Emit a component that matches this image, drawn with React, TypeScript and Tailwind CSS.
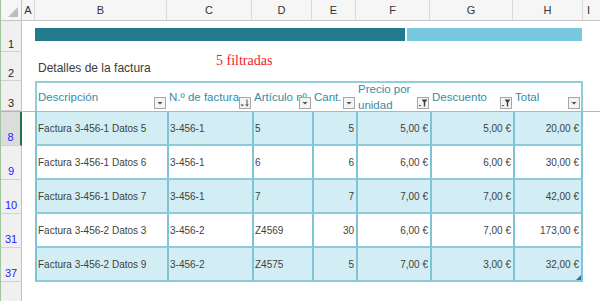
import React from 'react';

type Col = { key: string; w: string; right?: boolean };

const cols: Col[] = [
  { key: 'B', w: 'w-[132px]' },
  { key: 'C', w: 'w-[85px]' },
  { key: 'D', w: 'w-[60px]' },
  { key: 'E', w: 'w-[44px]', right: true },
  { key: 'F', w: 'w-[74px]', right: true },
  { key: 'G', w: 'w-[83px]', right: true },
  { key: 'H', w: 'w-[70px]', right: true },
];

const rows = [
  { n: '8', band: true, sel: true, v: ['Factura 3-456-1 Datos 5', '3-456-1', '5', '5', '5,00 €', '5,00 €', '20,00 €'] },
  { n: '9', band: false, v: ['Factura 3-456-1 Datos 6', '3-456-1', '6', '6', '6,00 €', '6,00 €', '30,00 €'] },
  { n: '10', band: true, v: ['Factura 3-456-1 Datos 7', '3-456-1', '7', '7', '7,00 €', '7,00 €', '42,00 €'] },
  { n: '31', band: false, v: ['Factura 3-456-2 Datos 3', '3-456-2', 'Z4569', '30', '6,00 €', '7,00 €', '173,00 €'] },
  { n: '37', band: true, v: ['Factura 3-456-2 Datos 9', '3-456-2', 'Z4575', '5', '7,00 €', '3,00 €', '32,00 €'] },
];

type Kind = 'plain' | 'sort' | 'filter';

const headers: { label: React.ReactNode; kind: Kind }[] = [
  { label: 'Descripción', kind: 'plain' },
  { label: 'N.º de factura', kind: 'sort' },
  { label: 'Artículo nº', kind: 'plain' },
  { label: 'Cant.', kind: 'plain' },
  { label: <>Precio por<br />unidad</>, kind: 'filter' },
  { label: 'Descuento', kind: 'filter' },
  { label: 'Total', kind: 'plain' },
];

function FilterButton({ kind }: { kind: Kind }) {
  return (
    <div className="absolute right-[1px] bottom-[2px] w-[12px] h-[12px] border border-[#a6a6a6] bg-[#f4f4f4] flex items-center justify-center">
      <svg width="10" height="10" viewBox="0 0 10 10">
        {kind === 'plain' && <polygon points="2.5,4 7.5,4 5,6.5" fill="#505050" />}
        {kind === 'sort' && (
          <>
            <polygon points="0.5,6.5 4,6.5 2.25,8.5" fill="#505050" />
            <rect x="6.5" y="1.5" width="1" height="5.5" fill="#505050" />
            <polygon points="5.3,6.5 8.7,6.5 7,8.8" fill="#505050" />
          </>
        )}
        {kind === 'filter' && (
          <>
            <polygon points="0.5,7 3.5,7 2,8.6" fill="#505050" />
            <polygon points="3.6,1.6 9.4,1.6 7.2,4.6 7.2,8.6 5.8,8.6 5.8,4.6" fill="#404040" />
          </>
        )}
      </svg>
    </div>
  );
}

function RowHead({ label, h, blue, sel, bottom }: { label: string; h: string; blue?: boolean; sel?: boolean; bottom?: string }) {
  return (
    <div
      className={`w-[21px] ${h} shrink-0 flex items-end justify-center ${bottom ?? 'pb-0'} border-b border-[#d2d2d2] text-[11px] leading-[14px] ${
        sel ? 'bg-[#dcdcdc] border-r-2 border-r-[#217346]' : 'bg-[#f0f0f0] border-r border-r-[#c2c2c2]'
      } ${blue ? 'text-[#2424ff]' : 'text-[#262626]'}`}
    >
      {label}
    </div>
  );
}

export default function App() {
  return (
    <div className="w-[600px] h-[301px] overflow-hidden bg-white border-l border-[#9fc59f] font-['Liberation_Sans',Arial,sans-serif] select-none">
      {/* column letters */}
      <div className="flex h-[21px] bg-[#f6f6f6] border-b border-[#c6c6c6] text-[11px] text-[#333]">
        <div className="w-[21px] shrink-0 border-r border-[#c2c2c2] flex items-end justify-end pr-[3px] pb-[3px]">
          <svg width="10" height="10" viewBox="0 0 10 10">
            <polygon points="0,10 10,10 10,0" fill="#bdbdbd" />
          </svg>
        </div>
        <div className="w-[13px] shrink-0 border-r border-[#d9d9d9] flex items-center justify-center">A</div>
        {cols.map((c) => (
          <div key={c.key} className={`${c.w} shrink-0 border-r border-[#d9d9d9] flex items-center justify-center`}>
            {c.key}
          </div>
        ))}
        <div className="flex-1 flex items-center pl-[4px]">I</div>
      </div>

      {/* row 1: colour bars */}
      <div className="flex h-[31px]">
        <RowHead label="1" h="h-[31px]" />
        <div className="w-[13px] shrink-0" />
        <div className="flex gap-[2px] pt-[7px]">
          <div className="w-[370px] h-[13px] bg-[#217b8d]" />
          <div className="w-[175px] h-[13px] bg-[#78c9df]" />
        </div>
      </div>

      {/* row 2: title */}
      <div className="flex h-[29px]">
        <RowHead label="2" h="h-[29px]" />
        <div className="w-[13px] shrink-0" />
        <div className="w-[132px] shrink-0 flex items-center pt-[3px] pl-[3px] text-[12px] text-[#3b3b3b]">Detalles de la factura</div>
        <div className="pl-[49px] pt-[1px] font-['Liberation_Serif',serif] text-[14px] leading-[16px] text-[#ee1c25]">5 filtradas</div>
      </div>

      {/* row 3: table header */}
      <div className="flex h-[31px] border-b border-[#b4b4b4]">
        <RowHead label="3" h="h-[30px]" bottom="pb-0" />
        <div className="w-[13px] shrink-0" />
        {cols.map((c, i) => (
          <div
            key={c.key}
            className={`${c.w} shrink-0 relative flex items-center border-t-2 border-[#92cddc] bg-white text-[11.5px] leading-[16px] text-[#3a8ba3] ${
              i === 0 ? 'border-l-2 pl-[1px]' : 'pl-[2px]'
            } ${i === cols.length - 1 ? 'border-r-2' : ''}`}
          >
            <span className="whitespace-nowrap">{headers[i].label}</span>
            <FilterButton kind={headers[i].kind} />
          </div>
        ))}
      </div>

      {/* data rows */}
      {rows.map((r) => (
        <div key={r.n} className="flex h-[34px]">
          <RowHead label={r.n} h="h-[34px]" blue sel={r.sel} bottom="pb-[1px]" />
          <div className="w-[13px] shrink-0" />
          {cols.map((c, i) => (
            <div
              key={c.key}
              className={`${c.w} shrink-0 relative flex items-center border-l-2 border-b-2 border-l-[#7fc4d6] border-b-[#8ccbdc] text-[10px] text-[#3f3f3f] whitespace-nowrap ${
                r.band ? 'bg-[#d3edf4]' : 'bg-white'
              } ${c.right ? 'justify-end pr-[2px]' : 'pl-[1px]'} ${i === cols.length - 1 ? 'border-r-2 border-r-[#7fc4d6]' : ''}`}
            >
              {r.v[i]}
              {r.n === '37' && i === cols.length - 1 && (
                <svg className="absolute right-0 bottom-0" width="5" height="5" viewBox="0 0 5 5">
                  <polygon points="0,5 5,5 5,0" fill="#2f6fb0" />
                </svg>
              )}
            </div>
          ))}
        </div>
      ))}

      {/* remainder */}
      <div className="flex h-[20px]">
        <RowHead label="" h="h-[20px]" />
      </div>
    </div>
  );
}
